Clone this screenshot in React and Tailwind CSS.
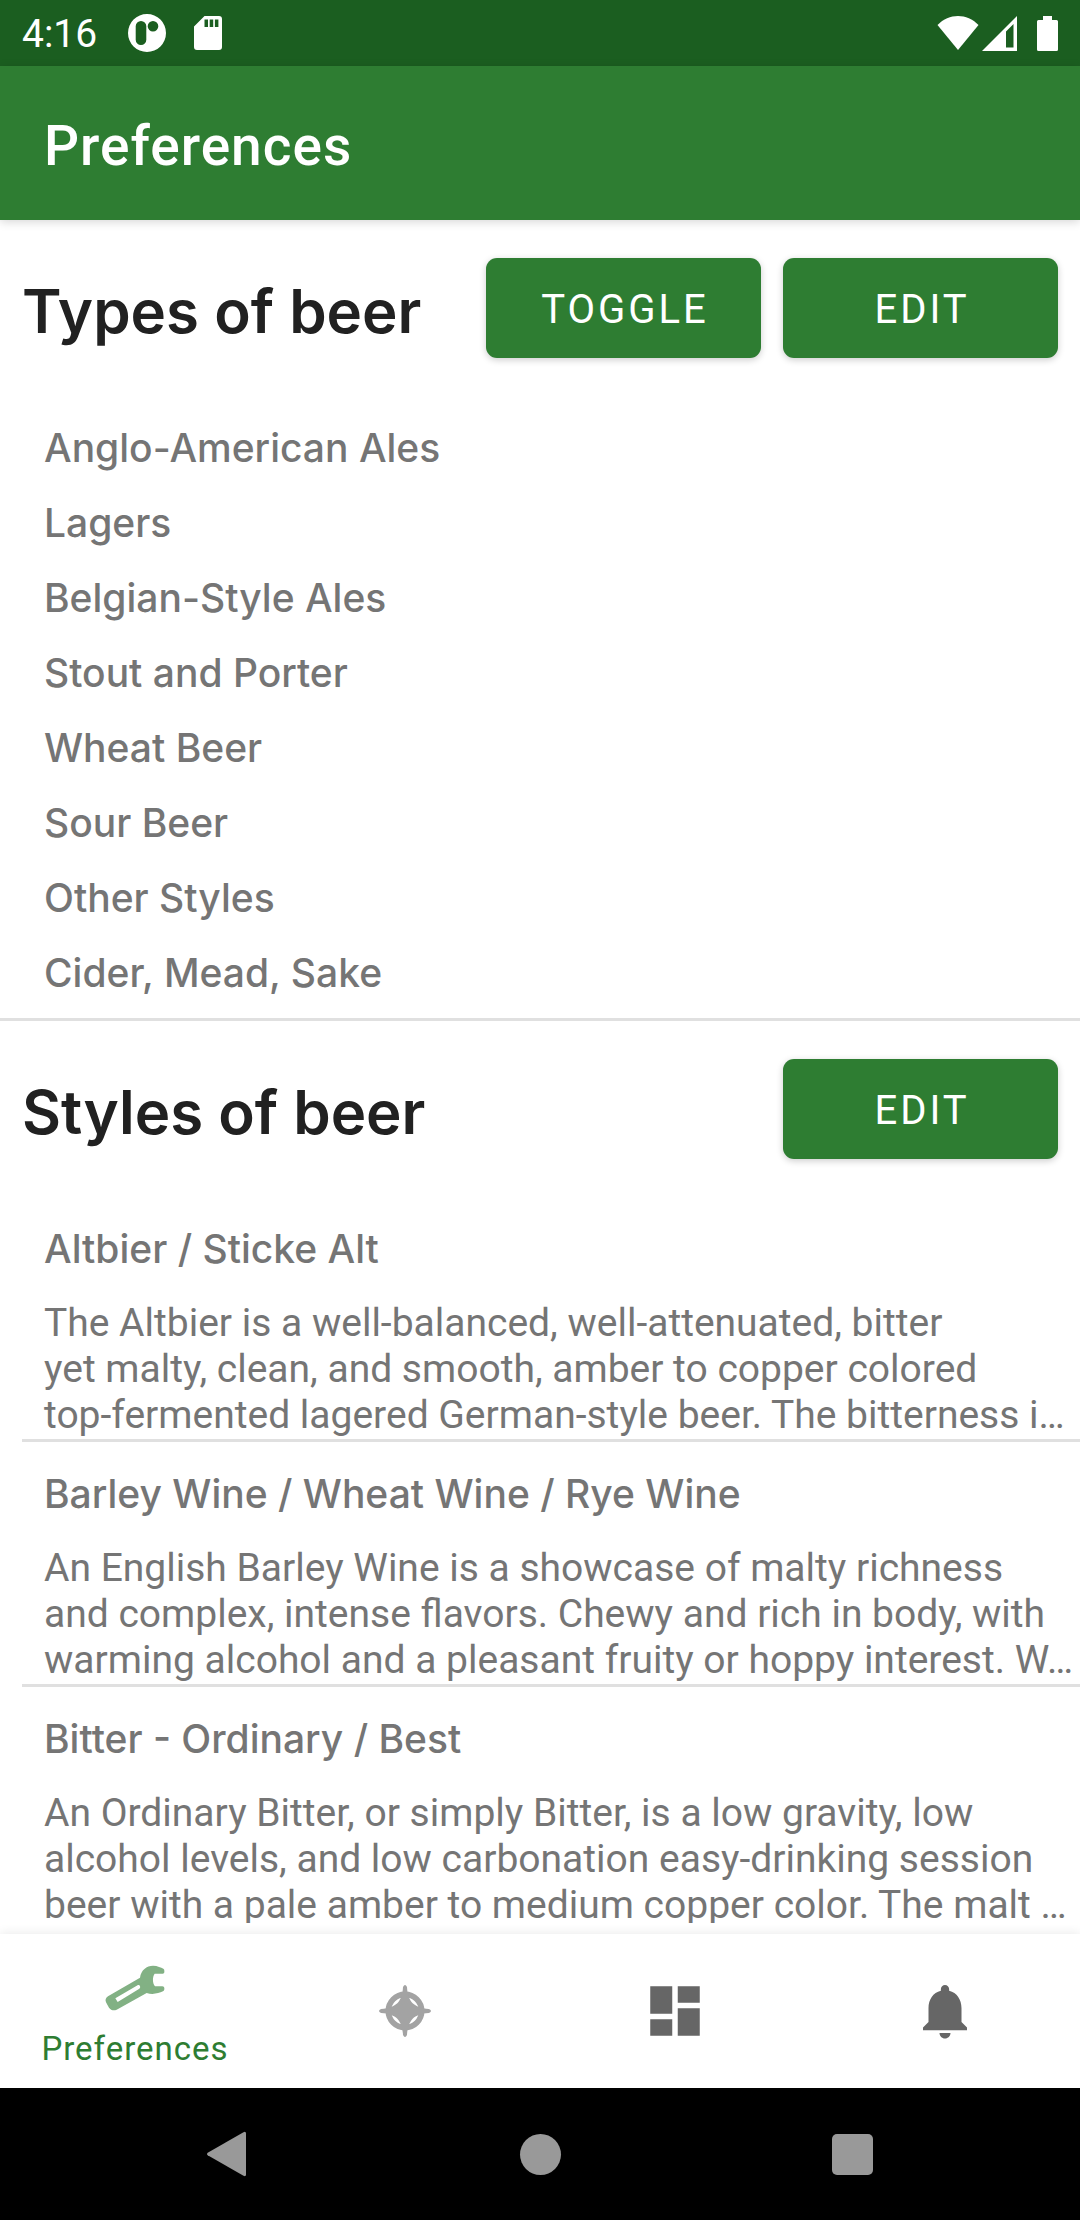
const beerTypes = [
  'Anglo-American Ales',
  'Lagers',
  'Belgian-Style Ales',
  'Stout and Porter',
  'Wheat Beer',
  'Sour Beer',
  'Other Styles',
  'Cider, Mead, Sake',
];

const beerStyles = [
  {
    name: 'Altbier / Sticke Alt',
    text: 'The Altbier is a well-balanced, well-attenuated, bitter\nyet malty, clean, and smooth, amber to copper colored\ntop-fermented lagered German-style beer. The bitterness i…',
  },
  {
    name: 'Barley Wine / Wheat Wine / Rye Wine',
    text: 'An English Barley Wine is a showcase of malty richness\nand complex, intense flavors. Chewy and rich in body, with\nwarming alcohol and a pleasant fruity or hoppy interest. W…',
  },
  {
    name: 'Bitter - Ordinary / Best',
    text: 'An Ordinary Bitter, or simply Bitter, is a low gravity, low\nalcohol levels, and low carbonation easy-drinking session\nbeer with a pale amber to medium copper color. The malt …',
  },
];

function StatusBar() {
  return (
    <div className="flex h-[66px] shrink-0 items-center bg-[#1b5e20] px-[22px] text-white">
      <span className="pt-[2px] text-[39px] leading-[46px]">4:16</span>
      <svg className="ml-[31px] h-[38px] w-[38px]" viewBox="0 0 38 38" fill="currentColor" aria-hidden="true">
        <path
          fillRule="evenodd"
          d="M19 0a19 19 0 1 1 0 38a19 19 0 1 1 0-38ZM13 7a5.3 5.3 0 0 0-5.3 5.3v13.4a5.3 5.3 0 0 0 10.6 0V12.300A5.3 5.3 0 0 0 13 7ZM25 7a5.300 5.300 0 1 0 0 10.600a5.300 5.300 0 1 0 0-10.600Z"
        />
      </svg>
      <svg className="ml-[28px] h-[34px] w-[28px]" viewBox="0 0 28 34" fill="currentColor" aria-hidden="true">
        <path
          fillRule="evenodd"
          d="M10.500 0H25a3 3 0 0 1 3 3V31a3 3 0 0 1-3 3H3a3 3 0 0 1-3-3V10.500ZM10.500 3.500V11H14V3.500ZM15.700 3.500V11H19.200V3.500ZM20.900 3.500V11H24.400V3.500Z"
        />
      </svg>
      <svg className="ml-auto h-[34px] w-[42px]" viewBox="0 0 42 34" fill="currentColor" aria-hidden="true">
        <path d="M0.500 9C12-3 30-3 41.500 9L21 34Z" />
      </svg>
      <svg className="ml-[3px] h-[35px] w-[35px]" viewBox="0 0 35 35" fill="currentColor" aria-hidden="true">
        <path fillRule="evenodd" d="M0 35L35 0V35ZM24 15.500V31.500H31.500V8Z" />
      </svg>
      <svg className="ml-[20px] h-[35px] w-[21px]" viewBox="0 0 21 35" fill="currentColor" aria-hidden="true">
        <path d="M6 0H15V4H19.500A1.500 1.500 0 0 1 21 5.500V33.500A1.500 1.500 0 0 1 19.500 35H1.500A1.500 1.500 0 0 1 0 33.500V5.500A1.500 1.500 0 0 1 1.500 4H6Z" />
      </svg>
    </div>
  );
}

function GreenButton({ children }) {
  return (
    <button
      type="button"
      className="h-[100px] w-[275px] rounded-[11px] bg-[#2e7d32] pt-[3px] pl-[3px] text-[40px] tracking-[3px] text-white uppercase shadow-[0_2px_7px_rgba(0,0,0,0.2)]"
    >
      {children}
    </button>
  );
}

function SectionHeader({ title, actions }) {
  return (
    <div className="flex items-center gap-[22px] px-[22px] py-[38px]">
      <h2 className="flex-1 pt-[6px] font-[Inter,sans-serif] text-[60px] leading-[94px] font-semibold whitespace-nowrap text-[#212121]">
        {title}
      </h2>
      {actions.map((label) => (
        <GreenButton key={label}>{label}</GreenButton>
      ))}
    </div>
  );
}

function Tab({ label, selected, children }) {
  return (
    <button
      type="button"
      aria-label={label}
      aria-current={selected ? 'page' : undefined}
      className="flex flex-col items-center justify-center"
    >
      {selected ? (
        <span className="flex flex-col items-center gap-[8px] pt-[2px]">
          {children}
          <span className="text-[33px] leading-[40px] tracking-[1px] text-[#2e7d32]">{label}</span>
        </span>
      ) : (
        children
      )}
    </button>
  );
}

function BottomNav() {
  return (
    <nav className="relative grid h-[154px] shrink-0 grid-cols-4 bg-white shadow-[0_-2px_9px_rgba(0,0,0,0.07)]">
      <Tab label="Preferences" selected>
        <svg className="h-[66px] w-[66px]" viewBox="36 48 198 198" fill="#82b184" aria-hidden="true">
          <path
            fillRule="evenodd"
            d="M150 116C153 93 170 80 189 80C203 80 213 86 220 89Q223 91 223 95V100Q223 104 218 104H194C187 113 187 132 195 142H217Q223 142 223 147V151Q223 155 219 157C206 163 188 168 170 162L80 212C71 216 62 213 57 206L48 190C45 182 47 177 54 172ZM76 178L144 138Q148 137 150 141Q152 146 148 149L83 189Z"
          />
        </svg>
      </Tab>
      <Tab label="Explore">
        <svg className="h-[66px] w-[66px]" viewBox="36 55 198 198" fill="#a3a3a3" aria-hidden="true">
          <circle cx="135" cy="154" r="50" fill="none" stroke="#a3a3a3" strokeWidth="17" />
          <path d="M129 82Q135 70 141 82C142 106 149 121 158 131C168 140 183 147 207 148Q219 154 207 160C183 161 168 168 158 177C149 187 142 202 141 226Q135 238 129 226C128 202 121 187 112 177C102 168 87 161 63 160Q51 154 63 148C87 147 102 140 112 131C121 121 128 106 129 82Z" />
        </svg>
      </Tab>
      <Tab label="Dashboard">
        <svg className="h-[66px] w-[66px]" viewBox="0 0 24 24" fill="#666666" aria-hidden="true">
          <path d="M3 13h8V3H3v10zm0 8h8v-6H3v6zm10 0h8V11h-8v10zm0-18v6h8V3h-8z" />
        </svg>
      </Tab>
      <Tab label="Notifications">
        <svg className="h-[66px] w-[66px]" viewBox="0 0 24 24" fill="#666666" aria-hidden="true">
          <path d="M12 22c1.100 0 2-.9 2-2h-4c0 1.100.89 2 2 2zm6-6v-5c0-3.070-1.640-5.640-4.500-6.320V4c0-.83-.67-1.500-1.500-1.500s-1.500.67-1.500 1.500v.68C7.630 5.360 6 7.920 6 11v5l-2 2v1h16v-1l-2-2z" />
        </svg>
      </Tab>
    </nav>
  );
}

function SystemBar() {
  return (
    <div className="grid h-[132px] shrink-0 grid-cols-3 bg-black px-[72px]">
      <button type="button" aria-label="Back" className="flex items-center justify-center">
        <svg className="h-[46px] w-[42px]" viewBox="0 0 42 46" fill="#999999" aria-hidden="true">
          <path d="M36.500 1.200Q39 0 39 2.500V43.500Q39 46 36.500 44.800L0.700 24.300Q-0.700 23 0.700 21.700Z" />
        </svg>
      </button>
      <button type="button" aria-label="Home" className="flex items-center justify-center">
        <span className="h-[41px] w-[41px] rounded-full bg-[#999999]" />
      </button>
      <button type="button" aria-label="Recent apps" className="flex items-center justify-center">
        <span className="h-[41px] w-[41px] rounded-[5px] bg-[#999999]" />
      </button>
    </div>
  );
}

export default function App() {
  return (
    <div className="flex h-screen flex-col bg-white font-[Roboto,sans-serif]">
      <StatusBar />
      <header className="relative z-10 flex h-[154px] shrink-0 items-center bg-[#2e7d32] px-[44px] pt-[6px] shadow-[0_2px_9px_rgba(0,0,0,0.16)]">
        <h1 className="text-[55px] leading-[64px] font-medium tracking-[1px] text-white">Preferences</h1>
      </header>
      <main className="mb-[11px] min-h-0 flex-1 overflow-y-auto [scrollbar-width:none]">
        <section className="border-b-[3px] border-[#e0e0e0] pb-[22px]">
          <SectionHeader title="Types of beer" actions={['Toggle', 'Edit']} />
          <ul>
            {beerTypes.map((name) => (
              <li
                key={name}
                className="pt-[29px] pl-[44px] font-[Inter,sans-serif] text-[39px] leading-[46px] font-medium text-[#757575]"
              >
                {name}
              </li>
            ))}
          </ul>
        </section>
        <section>
          <SectionHeader title="Styles of beer" actions={['Edit']} />
          <ul className="pl-[22px]">
            {beerStyles.map(({ name, text }) => (
              <li key={name} className="border-b-[3px] border-[#e0e0e0] pb-[1px] pl-[22px]">
                <h3 className="pt-[29px] font-[Inter,sans-serif] text-[39px] leading-[46px] font-medium text-[#757575]">
                  {name}
                </h3>
                <p className="mt-[28px] text-[39px] leading-[46px] whitespace-pre-line text-[#757575]">{text}</p>
              </li>
            ))}
          </ul>
        </section>
      </main>
      <BottomNav />
      <SystemBar />
    </div>
  );
}
